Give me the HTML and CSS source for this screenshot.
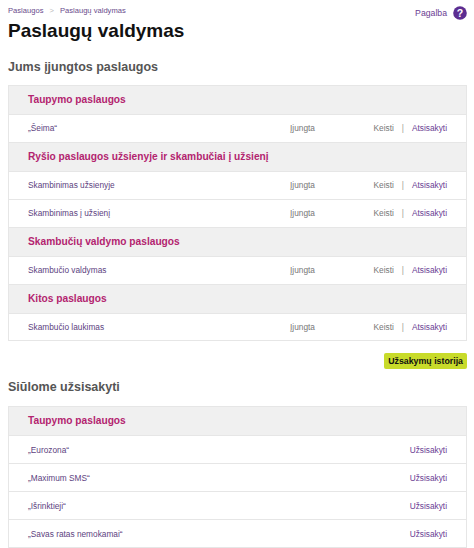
FILE: index.html
```html
<!DOCTYPE html>
<html lang="lt">
<head>
<meta charset="utf-8">
<link rel="stylesheet" href="styles.css">
</head>
<body>
<div class="page">
  <div class="top">
    <div class="crumbs"><span>Paslaugos</span><span class="sep">&gt;</span><span>Paslaugų valdymas</span></div>
    <div class="help">Pagalba <svg width="14" height="14" viewBox="0 0 14 14"><circle cx="7" cy="7" r="6.8" fill="#5c2d91"/><text x="7" y="10.6" text-anchor="middle" font-family="Liberation Sans, sans-serif" font-weight="bold" font-size="10.5" fill="#fff">?</text></svg></div>
  </div>
  <h1 class="title">Paslaugų valdymas</h1>
  <h2 class="section">Jums įjungtos paslaugos</h2>
  <div class="table">
    <div class="group">Taupymo paslaugos</div>
    <div class="row"><span class="name">„Šeima“</span><span class="state">Įjungta</span><span class="acts"><span class="grey">Keisti</span><span class="bar">|</span><span class="link">Atsisakyti</span></span></div>
    <div class="group">Ryšio paslaugos užsienyje ir skambučiai į užsienį</div>
    <div class="row"><span class="name">Skambinimas užsienyje</span><span class="state">Įjungta</span><span class="acts"><span class="grey">Keisti</span><span class="bar">|</span><span class="link">Atsisakyti</span></span></div>
    <div class="row"><span class="name">Skambinimas į užsienį</span><span class="state">Įjungta</span><span class="acts"><span class="grey">Keisti</span><span class="bar">|</span><span class="link">Atsisakyti</span></span></div>
    <div class="group">Skambučių valdymo paslaugos</div>
    <div class="row"><span class="name">Skambučio valdymas</span><span class="state">Įjungta</span><span class="acts"><span class="grey">Keisti</span><span class="bar">|</span><span class="link">Atsisakyti</span></span></div>
    <div class="group">Kitos paslaugos</div>
    <div class="row"><span class="name">Skambučio laukimas</span><span class="state">Įjungta</span><span class="acts"><span class="grey">Keisti</span><span class="bar">|</span><span class="link">Atsisakyti</span></span></div>
  </div>
  <div class="btnline"><span class="btn">Užsakymų istorija</span></div>
  <h2 class="section second">Siūlome užsisakyti</h2>
  <div class="table">
    <div class="group">Taupymo paslaugos</div>
    <div class="row"><span class="name">„Eurozona“</span><span class="state"></span><span class="acts"><span class="link">Užsisakyti</span></span></div>
    <div class="row"><span class="name">„Maximum SMS“</span><span class="state"></span><span class="acts"><span class="link">Užsisakyti</span></span></div>
    <div class="row"><span class="name">„Išrinktieji“</span><span class="state"></span><span class="acts"><span class="link">Užsisakyti</span></span></div>
    <div class="row"><span class="name">„Savas ratas nemokamai“</span><span class="state"></span><span class="acts"><span class="link">Užsisakyti</span></span></div>
    <div class="row"></div>
  </div>
</div>
</body>
</html>
```
FILE: styles.css
```css
html, body { margin: 0; padding: 0; background: #fff; }
body { font-family: "Liberation Sans", Arial, sans-serif; color: #333; }
.page { padding: 0 7px 0 8px; }
.top { display: flex; justify-content: space-between; align-items: flex-start; height: 18px; }
.crumbs { font-size: 7.6px; color: #6a4b8c; padding-top: 6px; display: flex; gap: 6px; }
.crumbs .sep { color: #bbb; }
.help { font-size: 8.7px; color: #6a3d93; display: flex; align-items: center; gap: 6px; padding-top: 6px; }
.help svg { display: block; }
.title { margin: 0; font-size: 19px; font-weight: bold; color: #111; line-height: 26px; height: 26px; }
.section { margin: 0; font-size: 12.5px; font-weight: bold; color: #555; line-height: 18px; padding-top: 14px; height: 18px; padding-bottom: 9px; }
.section.second { padding-top: 9px; padding-bottom: 10px; }
.table { border: 1px solid #e6e6e6; border-bottom: none; }
.group { background: #f0f0f0; color: #b3246f; font-weight: bold; font-size: 10.2px; height: 28px; line-height: 28px; padding-left: 19px; border-bottom: 1px solid #e6e6e6; }
.row { display: grid; grid-template-columns: 262px 1fr auto; align-items: center; height: 26.9px; padding: 0 19px 0 19px; border-bottom: 1px solid #e6e6e6; font-size: 8.3px; }
.name { color: #5d3f80; }
.state { color: #777; }
.acts { display: flex; gap: 8px; }
.grey { color: #777; }
.bar { color: #999; }
.link { color: #6a3d93; }
.btnline { display: flex; justify-content: flex-end; padding-top: 12px; }
.btn { background: #c8db2a; color: #111; font-weight: bold; font-size: 8.8px; padding: 0 4px; height: 16px; line-height: 16px; border-radius: 2px; }
```
